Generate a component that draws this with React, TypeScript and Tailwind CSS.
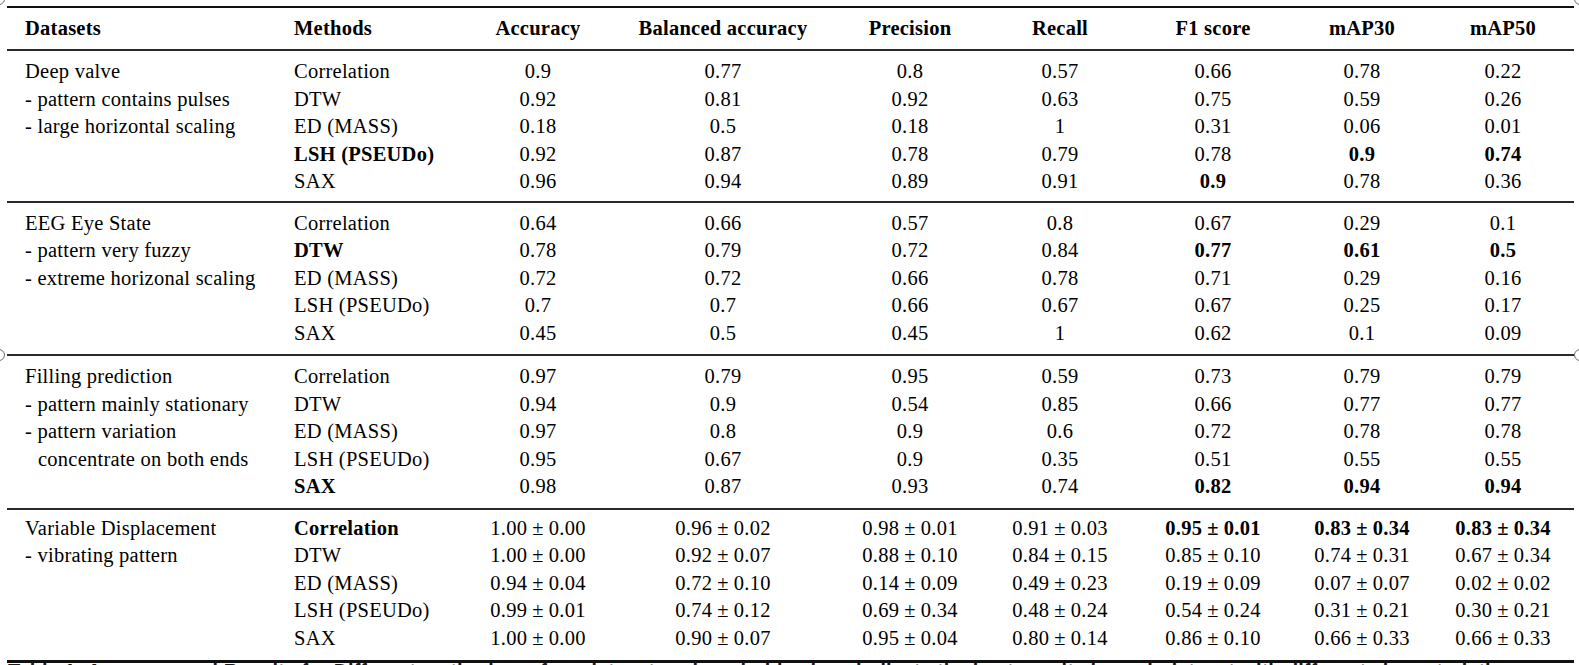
import React from "react";

type Group = {
  dataset: string[];
  rows: string[][];
  pad: [string, string];
};

// a leading "*" marks a bold cell
const groups: Group[] = [
  {
    dataset: ["Deep valve", "- pattern contains pulses", "- large horizontal scaling"],
    pad: ["pt-[7px]", "pb-[5px]"],
    rows: [
      ["Correlation", "0.9", "0.77", "0.8", "0.57", "0.66", "0.78", "0.22"],
      ["DTW", "0.92", "0.81", "0.92", "0.63", "0.75", "0.59", "0.26"],
      ["ED (MASS)", "0.18", "0.5", "0.18", "1", "0.31", "0.06", "0.01"],
      ["*LSH (PSEUDo)", "0.92", "0.87", "0.78", "0.79", "0.78", "*0.9", "*0.74"],
      ["SAX", "0.96", "0.94", "0.89", "0.91", "*0.9", "0.78", "0.36"],
    ],
  },
  {
    dataset: ["EEG Eye State", "- pattern very fuzzy", "- extreme horizonal scaling"],
    pad: ["pt-[7px]", "pb-[7px]"],
    rows: [
      ["Correlation", "0.64", "0.66", "0.57", "0.8", "0.67", "0.29", "0.1"],
      ["*DTW", "0.78", "0.79", "0.72", "0.84", "*0.77", "*0.61", "*0.5"],
      ["ED (MASS)", "0.72", "0.72", "0.66", "0.78", "0.71", "0.29", "0.16"],
      ["LSH (PSEUDo)", "0.7", "0.7", "0.66", "0.67", "0.67", "0.25", "0.17"],
      ["SAX", "0.45", "0.5", "0.45", "1", "0.62", "0.1", "0.09"],
    ],
  },
  {
    dataset: [
      "Filling prediction",
      "- pattern mainly stationary",
      "- pattern variation",
      ">concentrate on both ends",
    ],
    pad: ["pt-[7px]", "pb-[7px]"],
    rows: [
      ["Correlation", "0.97", "0.79", "0.95", "0.59", "0.73", "0.79", "0.79"],
      ["DTW", "0.94", "0.9", "0.54", "0.85", "0.66", "0.77", "0.77"],
      ["ED (MASS)", "0.97", "0.8", "0.9", "0.6", "0.72", "0.78", "0.78"],
      ["LSH (PSEUDo)", "0.95", "0.67", "0.9", "0.35", "0.51", "0.55", "0.55"],
      ["*SAX", "0.98", "0.87", "0.93", "0.74", "*0.82", "*0.94", "*0.94"],
    ],
  },
  {
    dataset: ["Variable Displacement", "- vibrating pattern"],
    pad: ["pt-[5px]", "pb-[8px]"],
    rows: [
      ["*Correlation", "1.00 ± 0.00", "0.96 ± 0.02", "0.98 ± 0.01", "0.91 ± 0.03", "*0.95 ± 0.01", "*0.83 ± 0.34", "*0.83 ± 0.34"],
      ["DTW", "1.00 ± 0.00", "0.92 ± 0.07", "0.88 ± 0.10", "0.84 ± 0.15", "0.85 ± 0.10", "0.74 ± 0.31", "0.67 ± 0.34"],
      ["ED (MASS)", "0.94 ± 0.04", "0.72 ± 0.10", "0.14 ± 0.09", "0.49 ± 0.23", "0.19 ± 0.09", "0.07 ± 0.07", "0.02 ± 0.02"],
      ["LSH (PSEUDo)", "0.99 ± 0.01", "0.74 ± 0.12", "0.69 ± 0.34", "0.48 ± 0.24", "0.54 ± 0.24", "0.31 ± 0.21", "0.30 ± 0.21"],
      ["SAX", "1.00 ± 0.00", "0.90 ± 0.07", "0.95 ± 0.04", "0.80 ± 0.14", "0.86 ± 0.10", "0.66 ± 0.33", "0.66 ± 0.33"],
    ],
  },
];

const headers = ["Accuracy", "Balanced accuracy", "Precision", "Recall", "F1 score", "mAP30", "mAP50"];

function Value({ text }: { text: string }) {
  const bold = text.startsWith("*");
  const raw = bold ? text.slice(1) : text;
  const parts = raw.split(" ± ");
  return (
    <span className={bold ? "font-bold" : ""}>
      {parts.length === 2 ? (
        <>
          {parts[0]}
          <span className="mx-[5px]">±</span>
          {parts[1]}
        </>
      ) : (
        raw
      )}
    </span>
  );
}

function Handle({ className }: { className: string }) {
  return (
    <div
      className={`absolute h-[12px] w-[12px] rounded-full border-[1.5px] border-[#6b6b6b] bg-white ${className}`}
    />
  );
}

export default function App() {
  return (
    <div
      className="relative h-[665px] w-[1579px] overflow-hidden bg-white pt-[6px] text-black"
      style={{ fontFamily: '"Liberation Serif", "Times New Roman", serif' }}
    >
      <div className="ml-[7px] w-[1567px]">
        <table className="w-full table-fixed border-collapse text-[20.5px] leading-[27.5px] tracking-[0.25px]">
          <colgroup>
            <col className="w-[278px]" />
            <col className="w-[175px]" />
            <col className="w-[156px]" />
            <col className="w-[214px]" />
            <col className="w-[160px]" />
            <col className="w-[140px]" />
            <col className="w-[166px]" />
            <col className="w-[132px]" />
            <col className="w-[146px]" />
          </colgroup>
          <thead className="border-t-2 border-[#111]">
            <tr className="h-[43px] font-bold">
              <th className="pl-[18px] text-left align-middle">Datasets</th>
              <th className="pl-[9px] text-left align-middle">Methods</th>
              {headers.map((h, i) => (
                <th
                  key={h}
                  className={`text-center align-middle ${i === headers.length - 1 ? "pl-[4px]" : ""}`}
                >
                  {h}
                </th>
              ))}
            </tr>
          </thead>
          {groups.map((g, gi) => (
            <tbody key={gi} className="border-t-2 border-[#2a2a2a]">
              {g.rows.map((row, ri) => {
                const pad = ri === 0 ? g.pad[0] : ri === g.rows.length - 1 ? g.pad[1] : "";
                return (
                  <tr key={ri}>
                    {ri === 0 && (
                      <td rowSpan={g.rows.length} className={`pl-[18px] align-top whitespace-nowrap ${g.pad[0]}`}>
                        {g.dataset.map((line) =>
                          line.startsWith(">") ? (
                            <div key={line} className="pl-[13px]">
                              {line.slice(1)}
                            </div>
                          ) : (
                            <div key={line}>{line}</div>
                          )
                        )}
                      </td>
                    )}
                    <td className={`pl-[9px] whitespace-nowrap ${pad}`}>
                      <Value text={row[0]} />
                    </td>
                    {row.slice(1).map((v, ci) => (
                      <td
                        key={ci}
                        className={`text-center whitespace-nowrap ${pad} ${ci === row.length - 2 ? "pl-[4px]" : ""}`}
                      >
                        <Value text={v} />
                      </td>
                    ))}
                  </tr>
                );
              })}
            </tbody>
          ))}
        </table>
        <div className="border-t-[3px] border-[#111]" />
      </div>
      <p
        className="ml-[8px] whitespace-nowrap text-[20px] font-bold leading-[16px] text-[#1a1a1a]"
        style={{ fontFamily: '"Liberation Sans", Arial, sans-serif' }}
      >
        Table 1: Accuracy and Results for Different methods on four datasets, where bold values indicate the best results in each dataset with different characteristics
      </p>

      <Handle className="left-[-7px] top-[-7px]" />
      <Handle className="right-[-7px] top-[-7px]" />
      <Handle className="left-[-7px] top-[349px]" />
      <Handle className="right-[-7px] top-[349px]" />
    </div>
  );
}
